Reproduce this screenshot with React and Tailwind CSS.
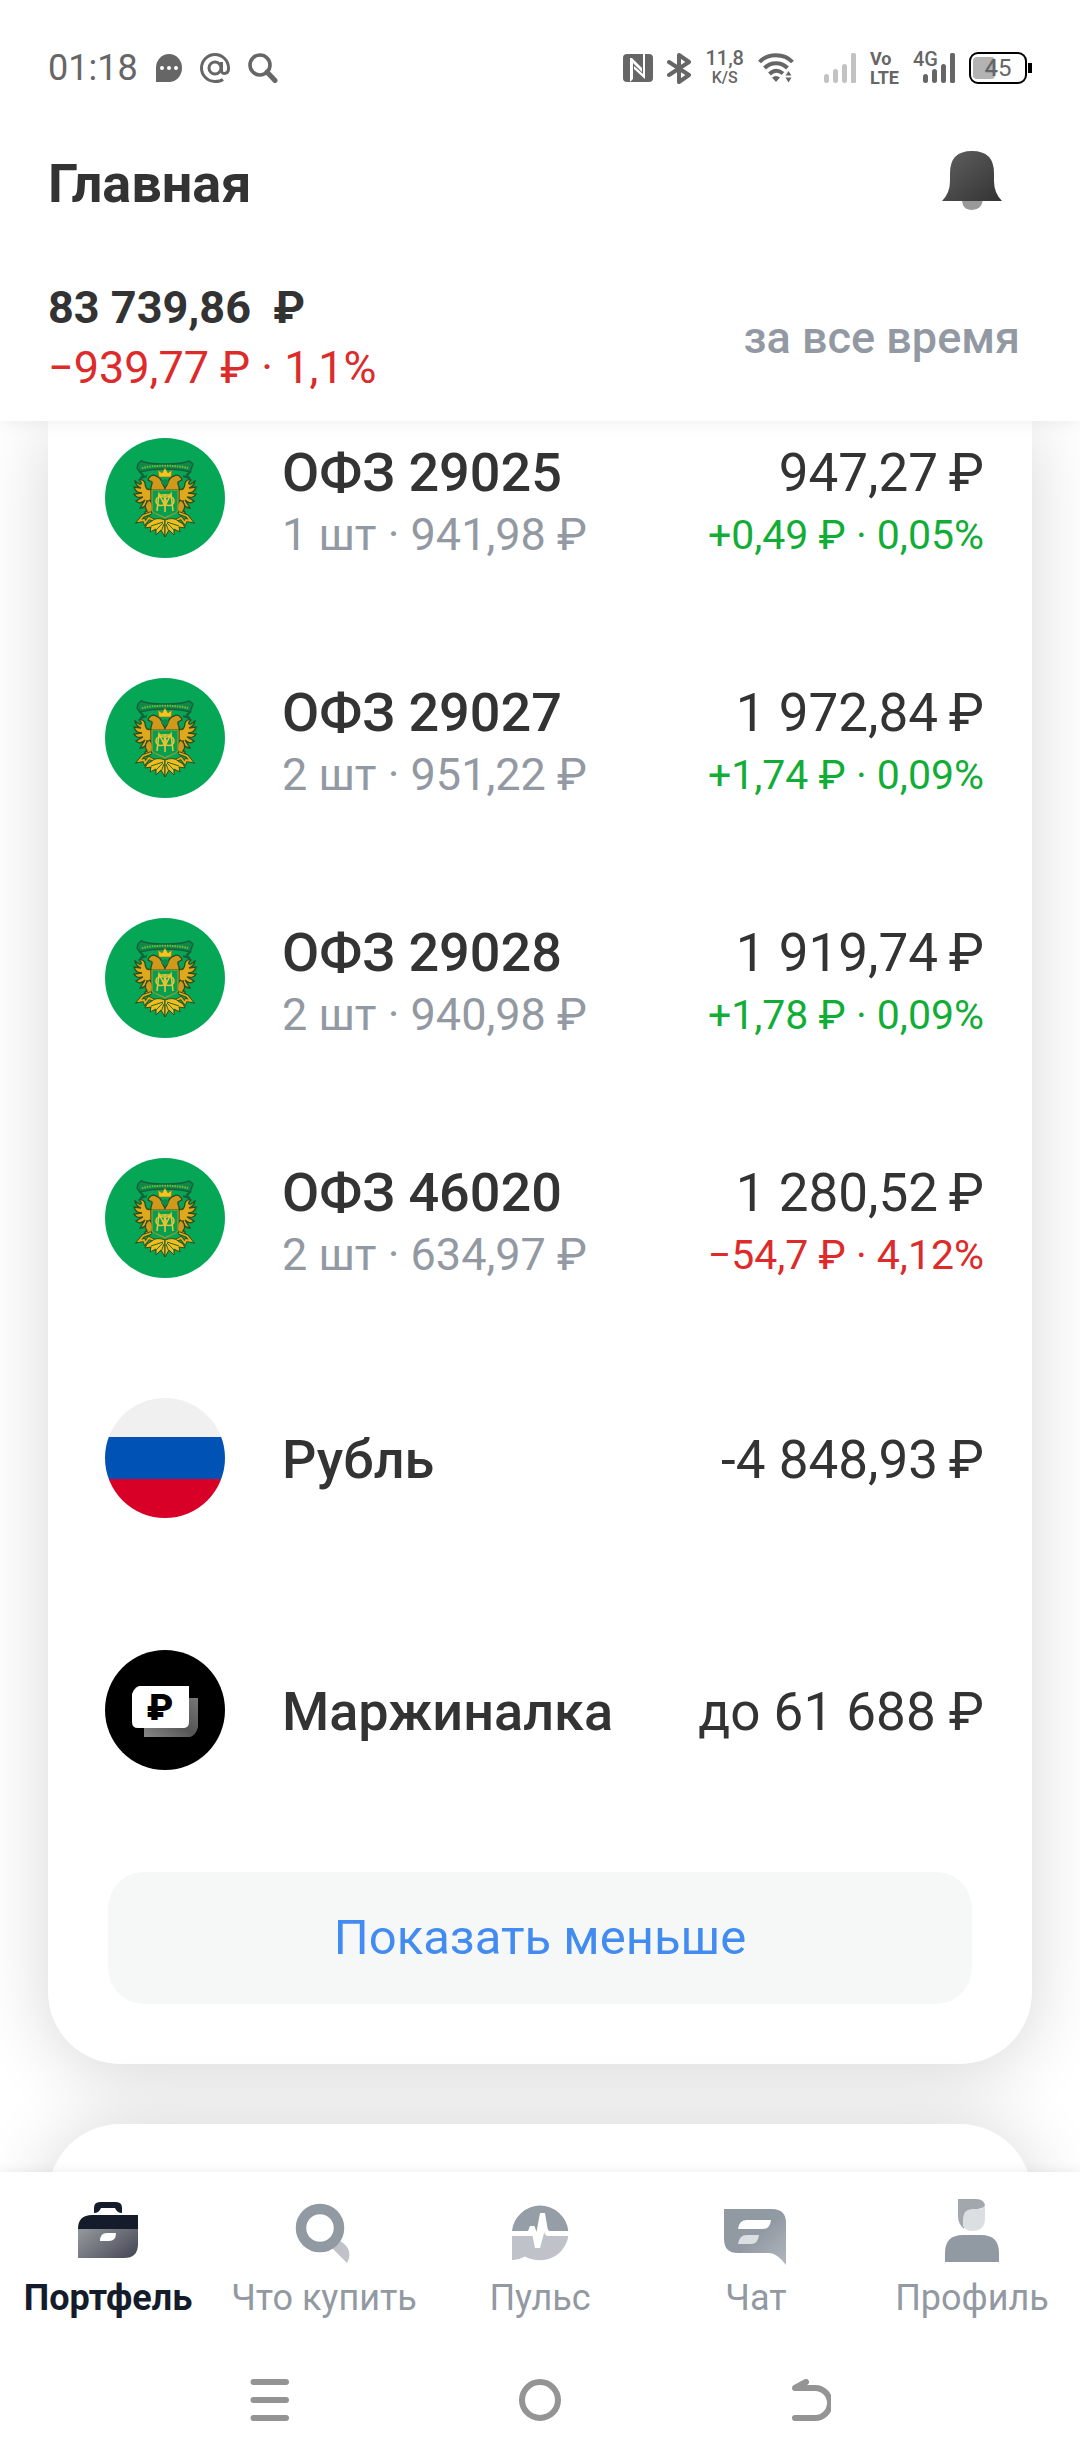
import React, { useState } from 'react';

const bonds = [
  { name: 'ОФЗ 29025', info: '1 шт · 941,98 ₽', value: '947,27', delta: '+0,49 ₽ · 0,05%', up: true },
  { name: 'ОФЗ 29027', info: '2 шт · 951,22 ₽', value: '1 972,84', delta: '+1,74 ₽ · 0,09%', up: true },
  { name: 'ОФЗ 29028', info: '2 шт · 940,98 ₽', value: '1 919,74', delta: '+1,78 ₽ · 0,09%', up: true },
  { name: 'ОФЗ 46020', info: '2 шт · 634,97 ₽', value: '1 280,52', delta: '−54,7 ₽ · 4,12%', up: false },
];

/* ---------- Status bar ---------- */

const SignalBars = ({ className }) => (
  <svg width="32" height="30" viewBox="0 0 32 30" className={className} fill="currentColor">
    <rect x="0" y="21" width="5" height="9" rx="2.5" />
    <rect x="9" y="16" width="5" height="14" rx="2.5" />
    <rect x="18" y="11" width="5" height="19" rx="2.5" />
    <rect x="27" y="0" width="5" height="30" rx="1.5" />
  </svg>
);

const StatusBar = () => (
  <div className="flex h-[136px] items-center justify-between px-12 text-[#666]">
    <div className="flex items-center gap-[18px]">
      <span className="text-4xl leading-10">01:18</span>
      <svg width="26" height="28" viewBox="0 0 26 28">
        <path d="M0 28V14A13 14 0 0 1 26 14A13 14 0 0 1 13 28Z" fill="#666" />
        <circle cx="6" cy="14" r="2" fill="#fff" />
        <circle cx="13" cy="14" r="2" fill="#fff" />
        <circle cx="20" cy="14" r="2" fill="#fff" />
      </svg>
      <svg width="30" height="30" viewBox="0 0 30 30" fill="none" stroke="#666" strokeWidth="3">
        <circle cx="15" cy="15" r="6" />
        <path d="M21.500 9V18C21.500 21.500 28.500 21.500 28.500 16V15A13.500 13.500 0 1 0 15 28.500C18 28.500 21 28 23 26.500" />
      </svg>
      <svg width="30" height="30" viewBox="0 0 30 30" fill="none" stroke="#666">
        <circle cx="12" cy="12" r="10" strokeWidth="3.600" />
        <path d="M19 19L27 27.500" strokeWidth="5" strokeLinecap="round" />
      </svg>
    </div>

    <div className="flex items-center gap-[14px]">
      <svg width="30" height="28" viewBox="0 0 30 28">
        <rect width="30" height="28" rx="4" fill="#666" />
        <path d="M7 4V28L10 25V9L19 18V14L9 4Z" fill="#fff" />
        <path d="M20 0H22V25L11 15V12L20 20Z" fill="#fff" />
      </svg>
      <svg width="24" height="31" viewBox="0 0 24 31" fill="none" stroke="#666" strokeWidth="4" strokeLinejoin="round" strokeLinecap="round">
        <path d="M2 9L22 22L12 29V2L22 9L2 22" />
      </svg>
      <div className="flex flex-col items-center font-medium">
        <span className="text-xl leading-[19px]">11,8</span>
        <span className="text-base leading-[19px]">K/S</span>
      </div>
      <svg width="36" height="30" viewBox="0 0 36 30" fill="none" stroke="#666" strokeWidth="4" className="mr-4">
        <path d="M1.500 9C10 0 26 0 34.500 9" />
        <path d="M6.500 15C13 8.500 23 8.500 29.500 15" />
        <path d="M11.500 21C15.500 17 20.500 17 25 20.500" />
        <path d="M14 24.500Q18 21.500 22 24.500L18 29Z" fill="#666" stroke="none" />
        <path d="M27.500 22.500L30.500 18L33.500 22.500ZM27.500 24.500L30.500 29.500L33.500 24.500Z" fill="#666" stroke="none" />
      </svg>
      <SignalBars className="text-[#c2c2c2]" />
      <div className="flex flex-col text-[18px] leading-[19px] font-bold">
        <span>Vo</span>
        <span>LTE</span>
      </div>
      <div className="relative pl-[10px]">
        <SignalBars />
        <span className="absolute -top-1 left-0 text-xl leading-5 font-medium">4G</span>
      </div>
      <div className="flex items-center">
        <div className="relative flex h-8 w-[58px] items-center justify-center rounded-[9px] border-2 border-black">
          <span className="absolute top-[3px] left-[2px] h-[22px] w-[22px] rounded bg-[#b3b3b3]"></span>
          <span className="relative text-2xl leading-6"><span className="font-medium">4</span>5</span>
        </div>
        <span className="ml-px h-[10px] w-1 bg-black"></span>
      </div>
    </div>
  </div>
);

/* ---------- Row pictures ---------- */

const Wing = () => (
  <g>
    <path d="M46 51C42 53 40 49 40 45C39 42 36 41 34 42C37 44 37 47 34 46L30 43C31 47 33 49 36 50L29 49C30 53 33 55 37 55L29 56C31 60 34 60 38 59L31 63C34 66 37 65 40 62L35 70C39 70 42 67 42 63L46 66Z" fill="#e0a91c" stroke="#2f4a1c" strokeWidth="1.300" />
    <path d="M45 62C40 64 39 69 42 73C38 74 40 78 45 76C48 74 48 69 47 66Z" fill="#cf9a1a" stroke="#2f4a1c" strokeWidth="1.300" />
    <path d="M46 75L38 78L34 83L39 82L40 85L44 80L52 84" fill="none" stroke="#2f4a1c" strokeWidth="3.500" />
    <path d="M46 75L38 78L34 83L39 82L40 85L44 80L52 84" fill="none" stroke="#e3ac19" strokeWidth="1.800" />
    <path d="M46 52C45 48 48 46 47 44L43 42C44 38 48 36 51 38C56 39 57 44 58 47L60 50V52Z" fill="#cf9a1c" stroke="#2f4a1c" strokeWidth="1.300" />
    <path d="M60 82C55 80 50 80 47 83L42 86L40 90L46 89L45 94L51 91L51 97L56 92L60 99Z" fill="#f0bd1c" stroke="#2f4a1c" strokeWidth="1" />
    <path d="M58 84L46 88M58 85L50 93M59 86L56 94" stroke="#1d6a35" strokeWidth="1" fill="none" />
  </g>
);

const Emblem = () => (
  <svg width="120" height="120" viewBox="0 0 120 120" className="shrink-0">
    <circle cx="60" cy="60" r="60" fill="#05a757" />
    <path d="M33 26L36 23C44 27 76 27 84 23L88 26L85 34C76 31 68 31 60 31C50 31 42 32 35 34L32 30Z" fill="#0b8a48" stroke="#14613a" strokeWidth="1.500" />
    <path d="M37 30C48 27 72 27 83 30" fill="none" stroke="#7fb83a" strokeWidth="2" strokeDasharray="1.500 1" />
    <path d="M34 33L38 37L36 40L42 38M86 33L82 37L84 40L78 38" fill="none" stroke="#14613a" strokeWidth="2" />
    <Wing />
    <g transform="translate(120 0) scale(-1 1)">
      <Wing />
    </g>
    <path d="M54 39L53 32L57 35L60 30L63 35L67 32L66 39Z" fill="#fbc41d" stroke="#7a7a18" strokeWidth="0.600" />
    <path d="M56 43L60 41L64 43L63 46L60 48L57 46Z" fill="#0b8a48" />
    <path d="M47 52H73V72C73 76 65 76 60 80C55 76 47 76 47 72Z" fill="#05a04f" stroke="#a8962a" strokeWidth="1.200" />
    <g fill="none" stroke="#e8c437" strokeWidth="1.600">
      <path d="M52 73L54 56L60 68L66 56L68 73" />
      <ellipse cx="56" cy="63" rx="5" ry="4.500" />
      <ellipse cx="64" cy="63" rx="5" ry="4.500" />
      <path d="M60 56V74M55 57H65" />
    </g>
  </svg>
);

const RubleFlag = () => (
  <div className="flex h-[120px] w-[120px] shrink-0 flex-col overflow-hidden rounded-full">
    <div className="h-[39px] bg-[#f0f0f0]"></div>
    <div className="h-[42px] bg-[#0052b4]"></div>
    <div className="h-[39px] bg-[#d80027]"></div>
  </div>
);

const MarginIcon = () => (
  <svg width="120" height="120" viewBox="0 0 120 120" className="shrink-0">
    <defs>
      <linearGradient id="margin-back" x1="0" y1="1" x2="1" y2="0">
        <stop offset="0" stopColor="#888" />
        <stop offset="0.500" stopColor="#555" />
        <stop offset="1" stopColor="#777" />
      </linearGradient>
    </defs>
    <circle cx="60" cy="60" r="60" fill="#000" />
    <path d="M39 48H93V77Q91 85 85 87H39Z" fill="url(#margin-back)" />
    <path d="M34 36H84V72Q84 78 78 78H33Q27 78 27 72V44Q29 38 34 36Z" fill="#fff" />
    <text x="55" y="70" textAnchor="middle" fontSize="37" className="font-black">₽</text>
  </svg>
);

const PositionRow = ({ picture, name, info, value, children }) => (
  <div className="flex pr-12 pl-[57px]">
    {picture}
    <div className={`flex flex-1 justify-between pt-1 pl-[57px] leading-[62px] ${info ? 'items-start' : 'items-center'}`}>
      <div>
        <div className="text-[54px] font-medium text-[#333]">{name}</div>
        {info && <div className="text-[45px] text-[#9299a2]">{info}</div>}
      </div>
      <div className="text-right">
        <div className="text-[53px] text-[#333]">{value}</div>
        {children}
      </div>
    </div>
  </div>
);

/* ---------- Bottom tabs ---------- */

const PortfolioIcon = () => (
  <svg width="72" height="72" viewBox="0 0 72 72">
    <defs>
      <linearGradient id="case" x1="0" y1="0.200" x2="1" y2="0.800">
        <stop offset="0" stopColor="#8f9497" />
        <stop offset="1" stopColor="#4a4a5a" />
      </linearGradient>
    </defs>
    <path d="M22 17V12Q22 6 28 6H44Q50 6 50 12V17Q45 17 43 12H29Q27 17 22 17Z" fill="#141c2b" />
    <path d="M6 33Q6 19 20 19H66V33Z" fill="#141c2b" />
    <path d="M6 33H66V48Q66 62 52 62H6Z" fill="url(#case)" />
    <path d="M28 45Q28 37 35 37H44Q44 45 37 45Z" fill="#fff" />
  </svg>
);

const SearchIcon = () => (
  <svg width="72" height="72" viewBox="0 0 72 72">
    <path d="M44 52L52 45C61 50 64 58 59 67Z" fill="#bfc2c8" />
    <circle cx="32" cy="32" r="19" fill="none" stroke="#9199a3" strokeWidth="10.500" />
  </svg>
);

const PulseIcon = () => (
  <svg width="72" height="72" viewBox="0 0 72 72">
    <path d="M8 35A28.300 28.300 0 0 1 64.300 35H46Q44 35 43.500 32L41 17H36L32.500 36L30.500 30H26L24 35Z" fill="#959da7" />
    <path d="M8 40H28.500L31 52H36L40.300 36Q41 40 44 40H64.300A28.300 28.300 0 0 1 36 64.300Q28 64.300 21 60.500Q15 64 8 64.300Z" fill="#bfc2c8" />
  </svg>
);

const ChatIcon = () => (
  <svg width="72" height="72" viewBox="0 0 72 72">
    <defs>
      <linearGradient id="chat" x1="0" y1="0" x2="1" y2="1">
        <stop offset="0.500" stopColor="#9199a3" />
        <stop offset="1" stopColor="#b3b7bd" />
      </linearGradient>
    </defs>
    <path d="M4 13H52Q66 13 66 27V69Q57 57 49 57H18Q4 57 4 43Z" fill="url(#chat)" />
    <path d="M18 33Q19 24 27 24H51Q50 33 43 33Z" fill="#fff" />
    <path d="M18 48Q19 39 27 39H39Q38 48 31 48Z" fill="#dcdfe1" />
  </svg>
);

const ProfileIcon = () => (
  <svg width="72" height="72" viewBox="0 0 72 72">
    <path d="M22 3H40Q49 3 49 11L42 13Q30 14 28 33Q22 28 22 20Z" fill="#a2a7ad" />
    <path d="M27 24Q27 13 37 13H42Q47 13 49 9V22Q49 35 36 35Q30 35 27 30Z" fill="#dcdfe1" />
    <path d="M9 66V57Q9 39 27 39H45Q63 39 63 57V66Z" fill="#9199a3" />
  </svg>
);

const tabs = [
  { label: 'Портфель', Icon: PortfolioIcon },
  { label: 'Что купить', Icon: SearchIcon },
  { label: 'Пульс', Icon: PulseIcon },
  { label: 'Чат', Icon: ChatIcon },
  { label: 'Профиль', Icon: ProfileIcon },
];

const App = () => {
  const [activeTab, setActiveTab] = useState('Портфель');

  return (
    <div className="flex min-h-screen flex-col bg-white font-['Roboto',sans-serif]">
      {/* Header */}
      <header className="relative z-10 bg-white shadow-[0_0_18px_rgba(0,0,0,0.08)]">
        <StatusBar />
        <div className="flex h-24 items-center justify-between pr-[78px] pl-12">
          <h1 className="text-[54px] leading-[60px] font-bold text-[#333]">Главная</h1>
          <button aria-label="Уведомления">
            <svg width="60" height="66" viewBox="0 0 60 66">
              <defs>
                <linearGradient id="bell" x1="0" y1="0" x2="1" y2="1">
                  <stop offset="0" stopColor="#606060" />
                  <stop offset="1" stopColor="#333" />
                </linearGradient>
              </defs>
              <path d="M20 48H41Q40 59 30 59Q20 59 20 48Z" fill="#999" />
              <path d="M0 50Q8 42 8 30V22Q8 0 30 0Q52 0 52 22V30Q52 42 60 50Z" fill="url(#bell)" />
            </svg>
          </button>
        </div>
        <div className="flex items-center justify-between pt-[46px] pr-[60px] pb-[23px] pl-12 text-[45px] leading-[60px]">
          <div>
            <div className="font-bold whitespace-pre text-[#333]">83 739,86  ₽</div>
            <div className="text-[#dd2a2a]">−939,77 ₽ · 1,1%</div>
          </div>
          <button className="font-medium text-[#9299a2]">за все время</button>
        </div>
      </header>

      {/* Positions */}
      <main className="flex-1 overflow-hidden px-12">
        <section className="rounded-b-[72px] bg-white pt-[17px] pb-[60px] shadow-[0_8px_72px_rgba(0,0,0,0.16)]">
          <div className="flex flex-col gap-28">
            {bonds.map((bond) => (
              <PositionRow key={bond.name} picture={<Emblem />} name={bond.name} info={bond.info} value={`${bond.value}\u2009₽`}>
                <div className={`text-[41px] ${bond.up ? 'text-[#12ad37]' : 'text-[#dd2a2a]'}`}>{bond.delta}</div>
              </PositionRow>
            ))}
          </div>
          <div className="mt-28 flex flex-col gap-[132px]">
            <PositionRow picture={<RubleFlag />} name="Рубль" value={'-4 848,93\u2009₽'} />
            <PositionRow picture={<MarginIcon />} name="Маржиналка" value="до 61 688 ₽" />
          </div>
          <div className="mt-[102px] px-[60px]">
            <button className="h-[132px] w-full rounded-[36px] bg-[#f6f8f8] text-[49px] text-[#428bf0]">Показать меньше</button>
          </div>
        </section>
        {/* Next card peeks out from under the tabs */}
        <section className="mt-[60px] -mb-28 h-40 rounded-t-[72px] bg-white shadow-[0_0_72px_rgba(0,0,0,0.16)]"></section>
      </main>

      {/* Tabs and system buttons */}
      <footer className="relative z-10 bg-white shadow-[0_0_12px_rgba(0,0,0,0.08)]">
        <nav className="grid grid-cols-5 pt-6">
          {tabs.map(({ label, Icon }) => (
            <button
              key={label}
              onClick={() => setActiveTab(label)}
              className={`flex flex-col items-center gap-[6px] text-4xl whitespace-nowrap ${activeTab === label ? 'font-bold text-[#141c2b]' : 'text-[#9299a2]'}`}
            >
              <Icon />
              <span className="leading-[48px]">{label}</span>
            </button>
          ))}
        </nav>
        <div className="mx-auto mt-[18px] grid h-[120px] w-3/4 grid-cols-3 place-items-center">
          <button aria-label="Недавние">
            <svg width="42" height="42" viewBox="0 0 42 42" stroke="#949494" strokeWidth="6" strokeLinecap="round">
              <path d="M4.500 3H37M4.500 21H37M4.500 39H37" />
            </svg>
          </button>
          <button aria-label="Домой">
            <svg width="42" height="42" viewBox="0 0 42 42" fill="none" stroke="#949494" strokeWidth="6">
              <circle cx="21" cy="21" r="18" />
            </svg>
          </button>
          <button aria-label="Назад">
            <svg width="42" height="42" viewBox="0 0 42 42" fill="none" stroke="#949494" strokeWidth="6" strokeLinecap="round" strokeLinejoin="round">
              <path d="M6 39H26A15 15 0 0 0 26 9H6L17 3" />
            </svg>
          </button>
        </div>
      </footer>
    </div>
  );
};

export default App;
